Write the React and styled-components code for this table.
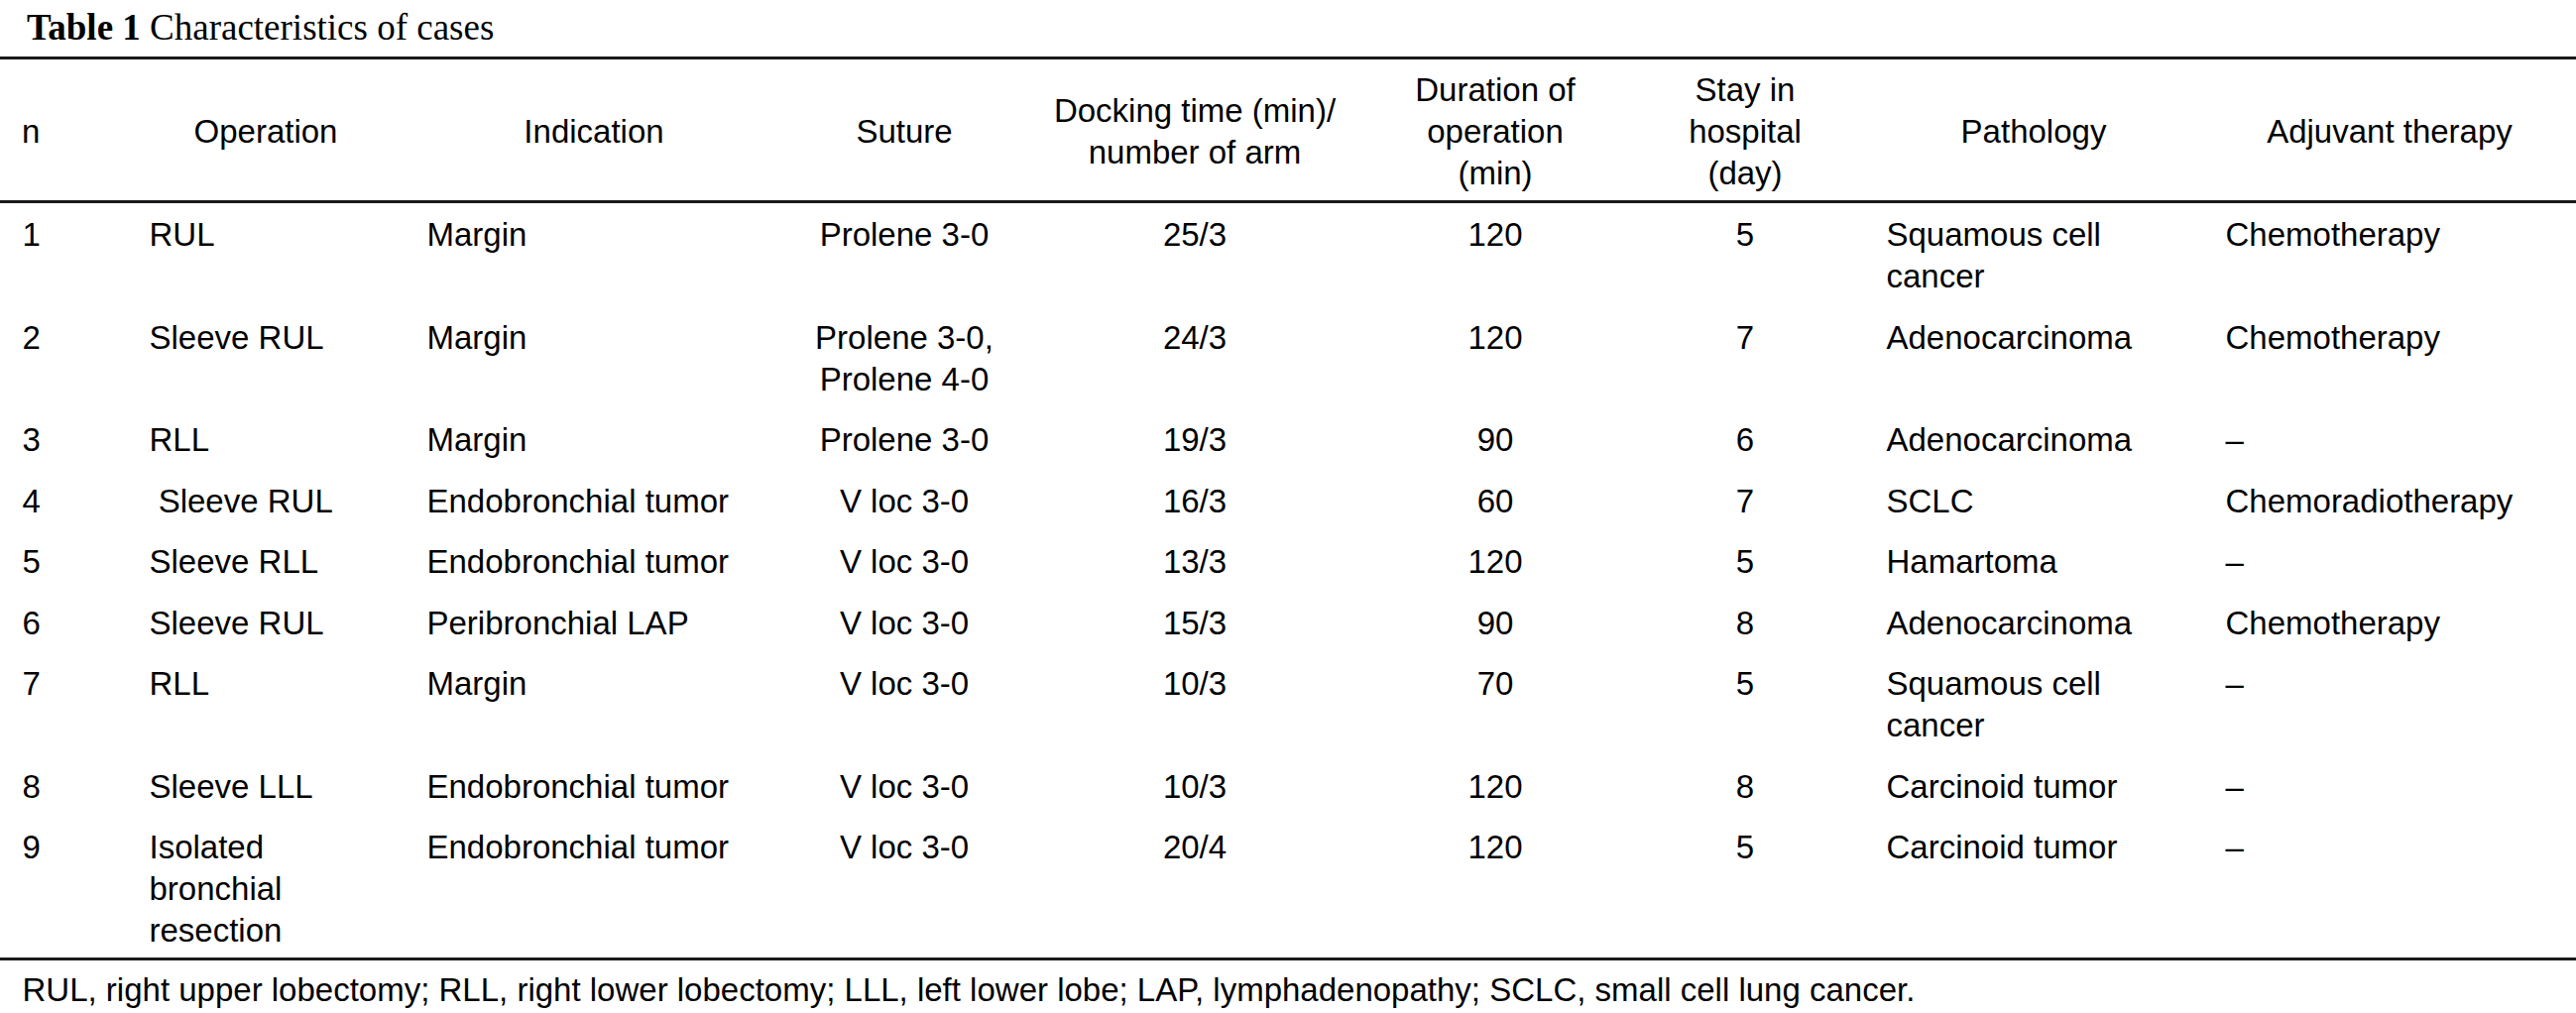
import React from "react";
import styled, { createGlobalStyle } from "styled-components";

const GlobalStyle = createGlobalStyle`
  html, body {
    margin: 0;
    padding: 0;
    background: #ffffff;
  }
  body {
    color: #000000;
    font-family: "Liberation Sans", Arial, sans-serif;
  }
`;

export const Page = styled.div`
  width: 2598px;
  display: flex;
  flex-direction: column;
`;

export const Title = styled.div`
  font-family: "Liberation Serif", "Times New Roman", serif;
  font-size: 37px;
  line-height: 42px;
  padding: 7px 0 0 27px;
  margin-bottom: 8px;
  white-space: nowrap;
`;

export const TitleLabel = styled.b`
  font-weight: 700;
`;

export const Table = styled.table`
  width: 100%;
  table-layout: fixed;
  border-collapse: collapse;
  border-top: 3px solid #1a1a1a;
  border-bottom: 3px solid #1a1a1a;
  font-size: 33px;
  line-height: 42px;
`;

export const Head = styled.thead`
  border-bottom: 3px solid #1a1a1a;
`;

export const HeadCell = styled.th`
  font-weight: 400;
  vertical-align: middle;
  text-align: ${(props) => (props.$left ? "left" : "center")};
  padding: 10px 22px 6px;
  height: 126px;
  box-sizing: content-box;
`;

export const Row = styled.tr`
  &:last-child td {
    padding-bottom: 6px;
  }
`;

export const Cell = styled.td`
  vertical-align: top;
  text-align: ${(props) => props.$align || "left"};
  padding: 11px 22.5px 8.5px;
`;

export const Footnote = styled.div`
  font-size: 33px;
  line-height: 42px;
  padding: 9px 0 0 22.5px;
  white-space: nowrap;
`;

const widths = [128, 280, 382, 244, 342, 264, 240, 342, 376];
const aligns = ["left", "left", "left", "center", "center", "center", "center", "left", "left"];

const headers = [
  ["n"],
  ["Operation"],
  ["Indication"],
  ["Suture"],
  ["Docking time (min)/", "number of arm"],
  ["Duration of", "operation", "(min)"],
  ["Stay in", "hospital", "(day)"],
  ["Pathology"],
  ["Adjuvant therapy"],
];

const rows = [
  ["1", "RUL", "Margin", "Prolene 3-0", "25/3", "120", "5", "Squamous cell cancer", "Chemotherapy"],
  ["2", "Sleeve RUL", "Margin", "Prolene 3-0, Prolene 4-0", "24/3", "120", "7", "Adenocarcinoma", "Chemotherapy"],
  ["3", "RLL", "Margin", "Prolene 3-0", "19/3", "90", "6", "Adenocarcinoma", "–"],
  ["4", "\u00a0Sleeve RUL", "Endobronchial tumor", "V loc 3-0", "16/3", "60", "7", "SCLC", "Chemoradiotherapy"],
  ["5", "Sleeve RLL", "Endobronchial tumor", "V loc 3-0", "13/3", "120", "5", "Hamartoma", "–"],
  ["6", "Sleeve RUL", "Peribronchial LAP", "V loc 3-0", "15/3", "90", "8", "Adenocarcinoma", "Chemotherapy"],
  ["7", "RLL", "Margin", "V loc 3-0", "10/3", "70", "5", "Squamous cell cancer", "–"],
  ["8", "Sleeve LLL", "Endobronchial tumor", "V loc 3-0", "10/3", "120", "8", "Carcinoid tumor", "–"],
  ["9", "Isolated bronchial resection", "Endobronchial tumor", "V loc 3-0", "20/4", "120", "5", "Carcinoid tumor", "–"],
];

const App = () => {
  return (
    <>
      <GlobalStyle />
      <Page>
        <Title>
          <TitleLabel>Table 1</TitleLabel> Characteristics of cases
        </Title>
        <Table>
          <colgroup>
            {widths.map((w, i) => (
              <col key={i} style={{ width: w }} />
            ))}
          </colgroup>
          <Head>
            <tr>
              {headers.map((lines, i) => (
                <HeadCell key={i} $left={i === 0}>
                  {lines.map((line, j) => (
                    <React.Fragment key={j}>
                      {j > 0 && <br />}
                      {line}
                    </React.Fragment>
                  ))}
                </HeadCell>
              ))}
            </tr>
          </Head>
          <tbody>
            {rows.map((row, r) => (
              <Row key={r}>
                {row.map((value, c) => (
                  <Cell key={c} $align={aligns[c]}>
                    {value}
                  </Cell>
                ))}
              </Row>
            ))}
          </tbody>
        </Table>
        <Footnote>
          RUL, right upper lobectomy; RLL, right lower lobectomy; LLL, left lower lobe; LAP, lymphadenopathy; SCLC, small cell lung cancer.
        </Footnote>
      </Page>
    </>
  );
};

export default App;
